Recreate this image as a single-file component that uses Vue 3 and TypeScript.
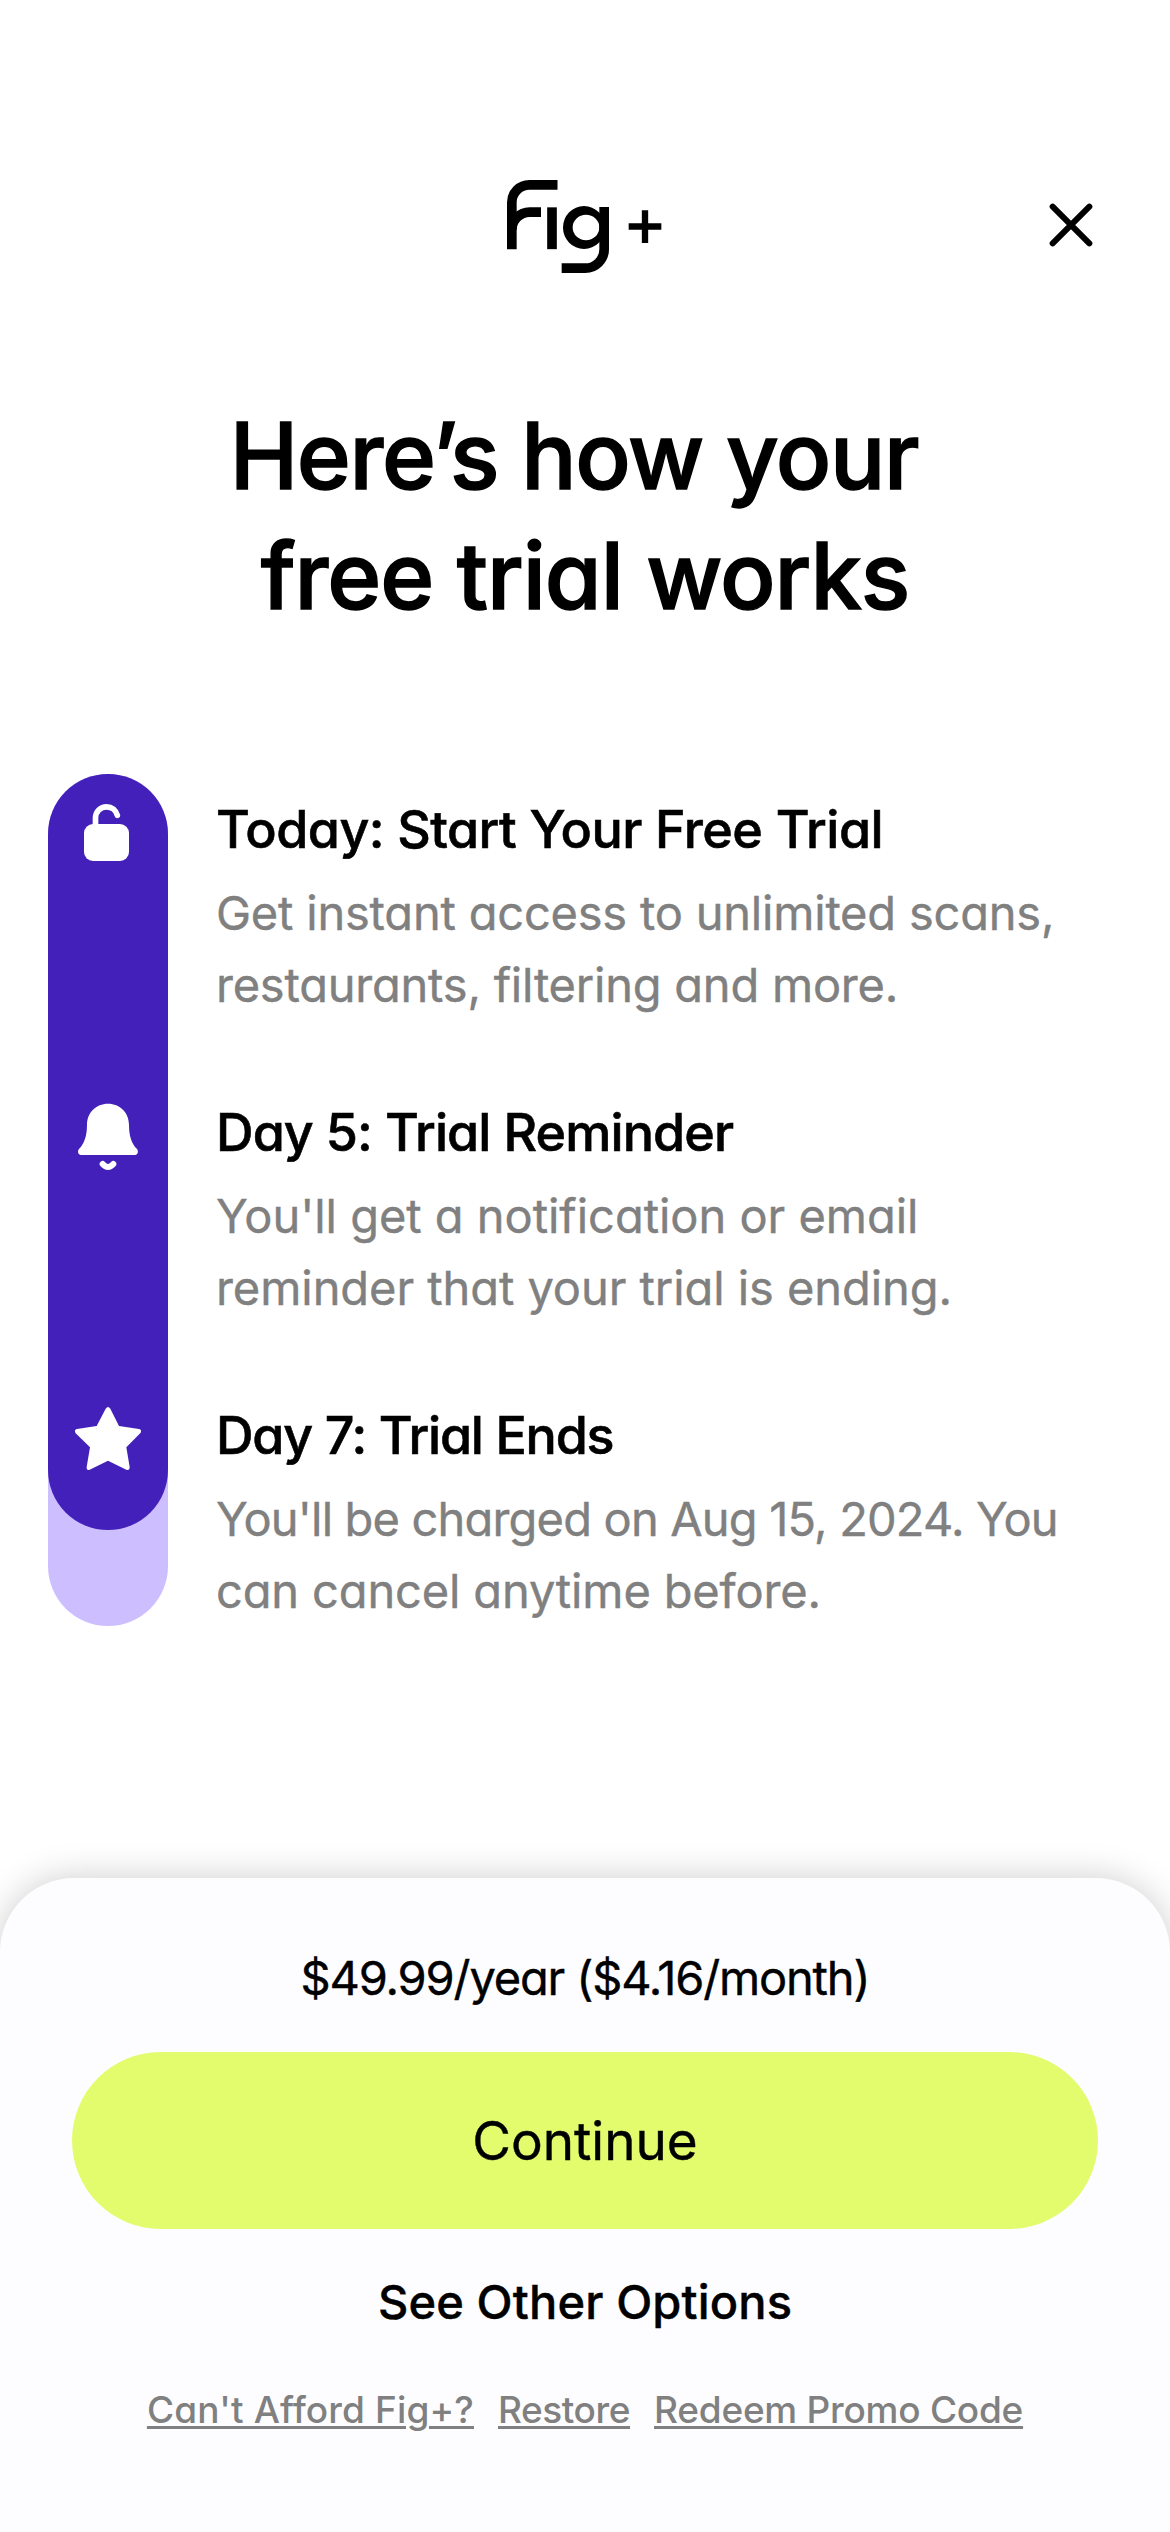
<script setup lang="ts">
interface Line {
  text: string
  spacing: number
}
interface Step {
  title: Line
  body: Line[]
}

const steps: Step[] = [
  {
    title: { text: 'Today: Start Your Free Trial', spacing: -0.55 },
    body: [
      { text: 'Get instant access to unlimited scans,', spacing: -0.2 },
      { text: 'restaurants, filtering and more.', spacing: -0.22 },
    ],
  },
  {
    title: { text: 'Day 5: Trial Reminder', spacing: -0.9 },
    body: [
      { text: "You'll get a notification or email", spacing: -0.03 },
      { text: 'reminder that your trial is ending.', spacing: -0.06 },
    ],
  },
  {
    title: { text: 'Day 7: Trial Ends', spacing: -1.2 },
    body: [
      { text: "You'll be charged on Aug 15, 2024. You", spacing: -0.82 },
      { text: 'can cancel anytime before.', spacing: -0.14 },
    ],
  },
]

const links: Line[] = [
  { text: "Can't Afford Fig+?", spacing: 0.13 },
  { text: 'Restore', spacing: -0.43 },
  { text: 'Redeem Promo Code', spacing: -0.24 },
]
</script>

<template>
  <main class="page">
    <header class="header">
      <svg class="logo" viewBox="0 0 660 390" role="img" aria-label="Fig plus">
        <g fill="none" stroke="#000" stroke-width="29">
          <path d="M95.500 267.500V127A52.500 52.500 0 0 1 148 74.500H232.500" />
          <path d="M95.500 210A53.500 53.500 0 0 1 149 156.500H183" />
          <path d="M216 142V267.500" />
          <path d="M372.500 141V267A57 57 0 0 1 315.500 324.500H245" />
        </g>
        <path
          fill="#000"
          fill-rule="evenodd"
          d="M249 202.500a63 64.500 0 1 0 126 0a63 64.500 0 1 0 -126 0ZM278 202.500a40 38 0 1 1 80 0a40 38 0 1 1 -80 0Z"
        />
        <path d="M446 199.500H544M495 151V249" fill="none" stroke="#000" stroke-width="19" />
      </svg>
      <button class="close" type="button" aria-label="Close">
        <svg viewBox="0 0 300 270">
          <path d="M98 80L208 190M208 80L98 190" fill="none" stroke="#000" stroke-width="18" stroke-linecap="round" />
        </svg>
      </button>
    </header>

    <h1 class="heading">
      <span class="heading-first">Here’s how your</span>
      <span class="heading-second">free trial works</span>
    </h1>

    <section class="timeline">
      <div class="track">
        <div class="track-fill">
          <svg class="icon" viewBox="54 42 360 360">
            <rect x="162" y="192" width="135" height="111" rx="27" fill="#fff" />
            <path d="M196.500 200V173A33 33 0 0 1 229.500 140.500C246 140.500 258 151 262 166" fill="none" stroke="#fff" stroke-width="17" stroke-linecap="round" />
          </svg>
          <svg class="icon" viewBox="54 -9 360 360">
            <path d="M234 71C270 71 297 98 297 134C297 168 305 190 321 207C326 213 324 225 315 225H153C144 225 142 213 147 207C163 190 171 168 171 134C171 98 198 71 234 71Z" fill="#fff" />
            <path d="M218 252Q234 270 250 252" fill="none" stroke="#fff" stroke-width="18" stroke-linecap="round" />
          </svg>
          <svg class="icon" viewBox="54 0 360 360">
            <path d="M227 86Q234 76 241 86L267 138L327 147Q336 149 332 158L289 202L299 261Q299 272 289 269L234 242L179 269Q169 272 170 261L180 202L137 160Q131 149 141 147L200 138Z" fill="#fff" />
          </svg>
        </div>
      </div>
      <div class="steps">
        <article v-for="step in steps" :key="step.title.text" class="step">
          <h2 class="step-title" :style="{ letterSpacing: step.title.spacing + 'px' }">{{ step.title.text }}</h2>
          <p class="step-body">
            <span v-for="line in step.body" :key="line.text" :style="{ letterSpacing: line.spacing + 'px' }">{{ line.text }}</span>
          </p>
        </article>
      </div>
    </section>

    <section class="sheet">
      <p class="price">$49.99/year ($4.16/month)</p>
      <button class="continue" type="button">Continue</button>
      <button class="options" type="button">See Other Options</button>
      <nav class="links">
        <a v-for="link in links" :key="link.text" :style="{ letterSpacing: link.spacing + 'px' }">{{ link.text }}</a>
      </nav>
    </section>
  </main>
</template>

<style>
body {
  margin: 0;
  background: #fff;
}
</style>

<style scoped>
.page {
  display: flex;
  flex-direction: column;
  width: 1170px;
  height: 2532px;
  overflow: hidden;
  background: #fff;
  color: #000;
  font-family: Inter, 'Liberation Sans', sans-serif;
  font-feature-settings: 'cv11';
}
button {
  border: 0;
  padding: 0;
  background: none;
  color: inherit;
  font: inherit;
  font-feature-settings: inherit;
}
svg {
  display: block;
}
.header {
  display: flex;
  align-items: flex-start;
  box-sizing: border-box;
  height: 396px;
  padding: 160px 50px 0 480px;
  justify-content: space-between;
}
.logo {
  width: 220px;
  height: 130px;
}
.close {
  width: 100px;
  height: 90px;
  margin-top: 20px;
}
.heading {
  display: flex;
  flex-direction: column;
  align-items: center;
  margin: 0 0 138px;
  font-size: 92px;
  font-weight: 500;
  line-height: 120px;
  white-space: nowrap;
  -webkit-text-stroke: 1.4px currentColor;
}
.heading-first {
  padding-right: 22px;
  letter-spacing: -1.35px;
}
.heading-second {
  letter-spacing: -1.05px;
}
.timeline {
  display: flex;
  gap: 48px;
  height: 852px;
  padding-left: 48px;
}
.track {
  width: 120px;
  border-radius: 60px;
  background: #ccbeff;
}
.track-fill {
  display: flex;
  flex-direction: column;
  gap: 183px;
  height: 756px;
  border-radius: 60px;
  background: #4320ba;
}
.icon {
  width: 120px;
  height: 120px;
}
.steps {
  display: flex;
  flex-direction: column;
  gap: 76px;
  padding-top: 20px;
  white-space: nowrap;
}
.step-title {
  margin: 0 0 11px;
  font-size: 52px;
  font-weight: 500;
  line-height: 72px;
  -webkit-text-stroke: 0.6px currentColor;
}
.step-body {
  display: flex;
  flex-direction: column;
  margin: 0;
  color: #808080;
  font-size: 47px;
  line-height: 72px;
  -webkit-text-stroke: 0.4px currentColor;
}
.sheet {
  display: flex;
  flex-direction: column;
  align-items: center;
  box-sizing: border-box;
  flex: 1;
  margin-top: 252px;
  padding: 64px 72px 0;
  border-radius: 74px 74px 0 0;
  background: #fdfdff;
  box-shadow: 0 0 36px rgba(0, 0, 0, 0.2);
}
.price {
  margin: 0 0 38px;
  font-size: 47px;
  line-height: 72px;
  letter-spacing: -1.15px;
  -webkit-text-stroke: 0.4px currentColor;
}
.continue {
  width: 100%;
  height: 177px;
  border-radius: 88.5px;
  background: #e3fc6e;
  font-size: 53px;
  line-height: 72px;
  -webkit-text-stroke: 0.4px currentColor;
}
.options {
  margin: 37px 0 48px;
  font-size: 47px;
  font-weight: 500;
  line-height: 72px;
  letter-spacing: 0.15px;
  -webkit-text-stroke: 0.4px currentColor;
}
.links {
  display: flex;
  gap: 24px;
  color: #808080;
  font-size: 37px;
  font-weight: 500;
  line-height: 48px;
  white-space: nowrap;
}
.links a {
  text-decoration: underline;
  text-decoration-thickness: 3px;
  text-underline-offset: 3px;
}
</style>
